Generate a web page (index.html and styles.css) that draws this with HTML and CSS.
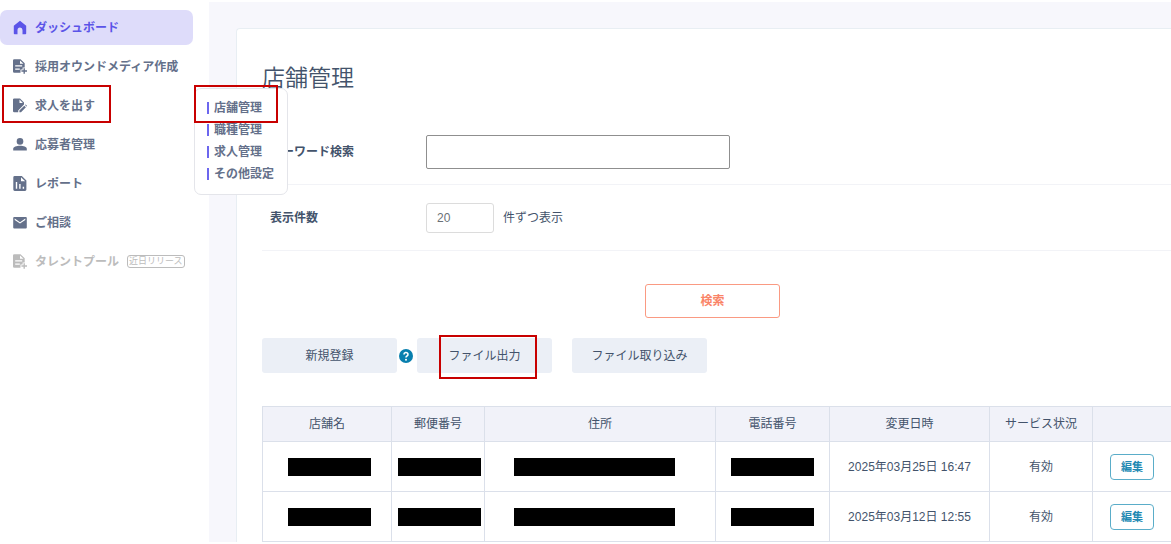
FILE: index.html
```html
<!DOCTYPE html>
<html lang="ja">
<head>
	<meta charset="UTF-8">
	<title>店舗管理</title>
	<meta name="viewport" content="width=device-width, initial-scale=1">
	<link rel="stylesheet" href="styles.css">
</head>
<body>

<svg class="defs" aria-hidden="true">
	<symbol id="i-home" viewBox="0 0 14 15"><path d="M.8 5.800 7 .8l6.200 5V13.500a.8.8 0 0 1-.8.8H9.500V10a2.500 2.500 0 0 0-5 0v4.300H1.600a.8.8 0 0 1-.8-.8z"/></symbol>
	<symbol id="i-doc-add" viewBox="0 0 14 15"><path fill-rule="evenodd" d="M1.200.2H7.500l4.200 4v4.300H9.600v2H7.500v3.300H1.200A1.200 1.200 0 0 1 0 12.600V1.400A1.200 1.200 0 0 1 1.200.2zM2.200 6.200v1.300h7V6.200zm0 3.300v1.300h4.600V9.500zM7 1.400v3.400h3.500z"/><path d="M10.500 9.300h1.400v2h2.100v1.400h-2.100v2.100h-1.400v-2.100H8.400v-1.400h2.100z"/></symbol>
	<symbol id="i-doc-edit" viewBox="0 0 14 15"><path fill-rule="evenodd" d="M1.200.4H7l4 4v2.200L5.200 12.400v1.800H1.200A1.200 1.200 0 0 1 0 13V1.600A1.200 1.200 0 0 1 1.200.4zM6.500 1.600v3.400h3.400z"/><path d="M6.400 12.600l4.900-4.900 1.600 1.600-4.900 4.900H6.400zM12 7l.6-.6L14.200 8l-.6.600z"/></symbol>
	<symbol id="i-user" viewBox="0 0 14 15"><circle cx="7" cy="4.400" r="3.300"/><path d="M.2 13.500v-1.700C.2 9.800 3.500 8.800 7 8.800s6.800 1 6.800 3v1.700z"/></symbol>
	<symbol id="i-report" viewBox="0 0 14 15"><path fill-rule="evenodd" d="M1.700 0h7.100L13.400 4.400v9.200a1.400 1.400 0 0 1-1.400 1.400H1.700A1.400 1.400 0 0 1 .3 13.600V1.400A1.400 1.400 0 0 1 1.700 0zM2.800 6v6.800h1.400V6zm3.400 2v4.800h1.400V8zm3.500 2.800v2h1.400v-2zM8 1.200v4h4.200z"/></symbol>
	<symbol id="i-mail" viewBox="0 0 14 15"><path fill-rule="evenodd" d="M1.200 2h11.600a1 1 0 0 1 1 1v9.500a1 1 0 0 1-1 1H1.200a1 1 0 0 1-1-1V3a1 1 0 0 1 1-1zM1.700 3.600v1.300L7 8.600l5.300-3.700V3.600L7 7.200z"/></symbol>
</svg>

<div class="app">

	<nav class="sidebar">
		<ul class="nav">
			<li><a class="nav-link active" href="#"><svg class="icon"><use href="#i-home"/></svg>ダッシュボード</a></li>
			<li><a class="nav-link" href="#"><svg class="icon"><use href="#i-doc-add"/></svg>採用オウンドメディア作成</a></li>
			<li class="has-menu">
				<a class="nav-link" href="#"><svg class="icon"><use href="#i-doc-edit"/></svg>求人を出す</a>
				<span class="mark mark-nav"></span>
				<ul class="submenu">
					<li><a href="#">店舗管理</a><span class="mark mark-sub"></span></li>
					<li><a href="#">職種管理</a></li>
					<li><a href="#">求人管理</a></li>
					<li><a href="#">その他設定</a></li>
				</ul>
			</li>
			<li><a class="nav-link" href="#"><svg class="icon"><use href="#i-user"/></svg>応募者管理</a></li>
			<li><a class="nav-link" href="#"><svg class="icon"><use href="#i-report"/></svg>レポート</a></li>
			<li><a class="nav-link" href="#"><svg class="icon"><use href="#i-mail"/></svg>ご相談</a></li>
			<li><a class="nav-link disabled" href="#"><svg class="icon"><use href="#i-doc-add"/></svg>タレントプール<span class="soon">近日リリース</span></a></li>
		</ul>
	</nav>

	<main class="content">
		<div class="card">
			<h1>店舗管理</h1>

			<form>
				<div class="field">
					<label for="keyword">キーワード検索</label>
					<input type="text" id="keyword" class="keyword">
				</div>
				<div class="field">
					<label for="count">表示件数</label>
					<input type="text" id="count" class="count" value="20">
					<span>件ずつ表示</span>
				</div>
				<div class="search">
					<button type="button" class="btn-search">検索</button>
				</div>
			</form>

			<div class="actions">
				<button type="button" class="btn">新規登録</button>
				<svg class="help" viewBox="0 0 14 14" role="img" aria-label="ヘルプ"><circle cx="7" cy="7" r="7"/><path d="M5 5.500a2 1.900 0 1 1 3 1.500c-.7.400-1 .7-1 1.500"/><circle class="dot" cx="7" cy="10.700" r="1"/></svg>
				<span class="marked">
					<button type="button" class="btn">ファイル出力</button>
					<span class="mark mark-btn"></span>
				</span>
				<button type="button" class="btn">ファイル取り込み</button>
			</div>

			<table>
				<colgroup>
					<col class="c-name"><col class="c-zip"><col class="c-addr"><col class="c-tel"><col class="c-date"><col class="c-status"><col>
				</colgroup>
				<thead>
					<tr><th>店舗名</th><th>郵便番号</th><th>住所</th><th>電話番号</th><th>変更日時</th><th>サービス状況</th><th></th></tr>
				</thead>
				<tbody>
					<tr>
						<td><span class="mask"></span></td>
						<td><span class="mask"></span></td>
						<td><span class="mask wide"></span></td>
						<td><span class="mask"></span></td>
						<td>2025年03月25日 16:47</td>
						<td>有効</td>
						<td><button type="button" class="btn-edit">編集</button></td>
					</tr>
					<tr>
						<td><span class="mask"></span></td>
						<td><span class="mask"></span></td>
						<td><span class="mask wide"></span></td>
						<td><span class="mask"></span></td>
						<td>2025年03月12日 12:55</td>
						<td>有効</td>
						<td><button type="button" class="btn-edit">編集</button></td>
					</tr>
					<tr><td></td><td></td><td></td><td></td><td></td><td></td><td></td></tr>
				</tbody>
			</table>
		</div>
	</main>

</div>

</body>
</html>
```
FILE: styles.css
```css
* {
	box-sizing: border-box;
}
body {
	margin: 0;
	background: #fff;
	color: #43536b;
	font: 12px/18px "Liberation Sans", "Noto Sans CJK JP", sans-serif;
}
button,
input {
	font: inherit;
	color: inherit;
}
button {
	padding: 0;
	cursor: pointer;
}
ul {
	list-style: none;
	margin: 0;
	padding: 0;
}
a {
	color: inherit;
	text-decoration: none;
}
.defs {
	display: none;
}
.app {
	display: flex;
	height: calc(100vh - 4px);
	margin: 2px 0;
	overflow: hidden;
}

/* sidebar */
.sidebar {
	flex: 0 0 209px;
	padding: 8px 16px 0 0;
	color: #64708a;
	font-weight: bold;
}
.nav {
	display: grid;
	gap: 4px;
}
.nav-link {
	display: flex;
	align-items: center;
	gap: 8px;
	height: 35px;
	padding-left: 13px;
	border-radius: 7px;
	white-space: nowrap;
}
.nav-link.active {
	background: #dedcfa;
	color: #5b54e8;
}
.nav-link.disabled {
	color: #bcbcbc;
}
.icon {
	width: 14px;
	height: 15px;
	fill: currentColor;
}
.soon {
	padding: 0 1px;
	border: 1px solid #bcbcbc;
	border-radius: 3px;
	font-size: 9px;
	line-height: 11px;
	font-weight: normal;
}
.has-menu {
	position: relative;
}
.submenu {
	position: absolute;
	z-index: 2;
	top: 0;
	left: 194px;
	width: 94px;
	padding: 8px 0 9px 12px;
	background: #fff;
	border: 1px solid #e4e5ea;
	border-radius: 7px;
}
.submenu li {
	position: relative;
	display: flex;
	align-items: center;
	height: 22px;
}
.submenu a {
	padding-left: 5px;
	border-left: 2px solid #6c66ee;
	line-height: 12px;
	white-space: nowrap;
}

/* red frames round the items to click */
.mark {
	position: absolute;
	border: 2px solid #c80000;
	pointer-events: none;
}
.mark-nav {
	inset: -3px auto auto 2px;
	width: 109px;
	height: 38px;
}
.mark-sub {
	inset: -12px auto auto -13px;
	width: 84px;
	height: 38px;
}
.marked {
	position: relative;
}
.mark-btn {
	inset: -3px 15px -6px 22px;
}

/* main */
.content {
	flex: 1;
	min-width: 0;
	padding: 26px 0 0 27px;
	background: #f7f7fc;
}
.card {
	min-height: 100%;
	padding: 32px 0 0 25px;
	background: #fff;
	border: 1px solid #e8eef3;
	border-right: 0;
	border-radius: 4px 0 0 0;
}
h1 {
	margin: 0 0 24px;
	font-size: 23px;
	line-height: 34px;
	font-weight: 350;
}
.field {
	display: flex;
	align-items: center;
	height: 66px;
	padding-left: 8px;
	border-bottom: 1px solid #f2f3f7;
}
.field label {
	width: 156px;
	font-weight: bold;
}
.field input {
	border: 1px solid #dcdcdc;
	border-radius: 3px;
}
.field .keyword {
	width: 304px;
	height: 34px;
	border-color: #8f8f8f;
	border-radius: 2px;
}
.field .count {
	width: 68px;
	height: 30px;
	margin-right: 9px;
	padding: 0 10px;
	color: #6a7076;
}
.search {
	padding: 33px 8px 20px 0;
}
.btn-search {
	display: block;
	width: 135px;
	height: 34px;
	margin: 0 auto;
	background: #fff;
	border: 1px solid #fa9a82;
	border-radius: 3px;
	color: #fa8468;
	font-weight: bold;
}
.actions {
	display: flex;
	align-items: center;
	margin-bottom: 33px;
}
.btn {
	display: block;
	width: 135px;
	height: 35px;
	background: #ebeff6;
	border: 0;
	border-radius: 3px;
}
.help {
	width: 14px;
	height: 14px;
	margin: 0 4px 0 2px;
	fill: #087fae;
}
.help path {
	fill: none;
	stroke: #fff;
	stroke-width: 1.6;
}
.help .dot {
	fill: #fff;
}
.marked {
	margin-right: 20px;
}

/* shop list */
table {
	width: 100%;
	table-layout: fixed;
	border-collapse: collapse;
}
.c-name { width: 129px; }
.c-zip { width: 93px; }
.c-addr { width: 231px; }
.c-tel { width: 114px; }
.c-date { width: 160px; }
.c-status { width: 103px; }
th,
td {
	height: 50px;
	padding: 0;
	border: 1px solid #dbe0ea;
	text-align: center;
}
th {
	height: 35px;
	background: #f1f2f9;
	font-weight: normal;
}
th:last-child,
td:last-child {
	border-right: 0;
}
.mask {
	display: block;
	width: 83px;
	height: 18px;
	margin: 0 auto;
	background: #000;
}
.mask.wide {
	width: 161px;
}
td:nth-child(1) {
	padding-left: 5px;
}
td:nth-child(2) {
	padding-left: 3px;
}
td:nth-child(3) {
	padding-right: 12px;
}
.btn-edit {
	width: 44px;
	height: 26px;
	background: #fff;
	border: 1px solid #5aadc9;
	border-radius: 4px;
	color: #2389b3;
	font-size: 11px;
	font-weight: bold;
}
```
